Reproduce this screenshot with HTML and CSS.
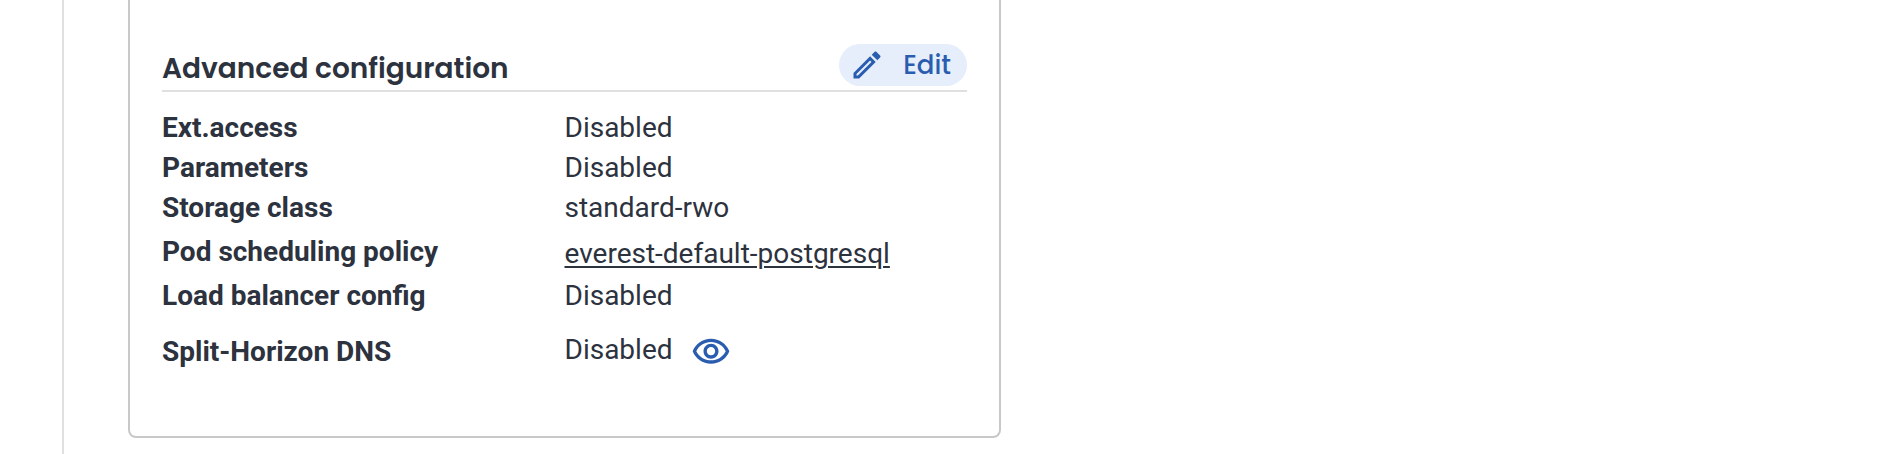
FILE: index.html
```html
<!DOCTYPE html>
<html lang="en">
<head>
    <title>Database overview</title>
    <meta charset="utf-8">
    <meta name="viewport" content="width=device-width, initial-scale=1.0">
    <link rel="stylesheet" href="styles.css">
</head>
<body>
    <main class="content">
        <section class="card">
            <div class="section-header">
                <h2>Advanced configuration</h2>
                <button type="button" class="btn-edit">
                    <svg viewBox="0 0 24 24" aria-hidden="true"><path d="m14.06 9.02.92.92L5.92 19H5v-.92zM17.66 3c-.25 0-.51.1-.7.29l-1.83 1.83 3.75 3.75 1.83-1.83c.39-.39.39-1.02 0-1.41l-2.34-2.34c-.2-.2-.45-.29-.71-.29m-3.6 3.19L3 17.25V21h3.75L17.81 9.94z"/></svg>
                    Edit
                </button>
            </div>

            <dl class="details">
                <div class="row">
                    <dt>Ext.access</dt>
                    <dd>Disabled</dd>
                </div>
                <div class="row">
                    <dt>Parameters</dt>
                    <dd>Disabled</dd>
                </div>
                <div class="row">
                    <dt>Storage class</dt>
                    <dd>standard-rwo</dd>
                </div>
                <div class="row row-link">
                    <dt>Pod scheduling policy</dt>
                    <dd><a href="#policy">everest-default-postgresql</a></dd>
                </div>
                <div class="row">
                    <dt>Load balancer config</dt>
                    <dd>Disabled</dd>
                </div>
                <div class="row row-action">
                    <dt>Split-Horizon DNS</dt>
                    <dd>
                        <span>Disabled</span>
                        <button type="button" class="btn-icon" aria-label="Show details">
                            <svg viewBox="0 0 24 24" aria-hidden="true"><path d="M12 6c3.79 0 7.17 2.13 8.82 5.5C19.17 14.87 15.79 17 12 17s-7.17-2.13-8.82-5.5C4.83 8.13 8.21 6 12 6m0-2C7 4 2.73 7.11 1 11.5 2.73 15.89 7 19 12 19s9.27-3.11 11-7.5C21.27 7.11 17 4 12 4m0 5c1.38 0 2.5 1.12 2.5 2.5S13.38 14 12 14s-2.5-1.12-2.5-2.5S10.62 9 12 9m0-2c-2.48 0-4.5 2.02-4.5 4.5S9.52 16 12 16s4.5-2.02 4.5-4.5S14.48 7 12 7"/></svg>
                        </button>
                    </dd>
                </div>
            </dl>
        </section>
    </main>
</body>
</html>
```
FILE: styles.css
```css
* {
    box-sizing: border-box;
}
body {
    margin: 0;
    background: #fff;
    color: #2c323e;
    font-family: Roboto, "Liberation Sans", sans-serif;
    font-size: 28px;
    line-height: 40px;
}
.content {
    display: grid;
    grid-template-columns: 1fr 1fr;
    align-items: start;
    gap: 28px;
    min-height: 100vh;
    margin-left: 62px;
    padding-left: 64px;
    border-left: 2px solid #e0e0e0;
}
.card {
    padding: 44px 32px 48px;
    border: 2px solid #c8c8c8;
    border-top: none;
    border-radius: 0 0 8px 8px;
}
.section-header {
    display: flex;
    justify-content: space-between;
    align-items: flex-end;
    padding-bottom: 4px;
    border-bottom: 2px solid #e0e0e0;
}
.section-header h2 {
    margin: 0;
    font-family: Poppins, Inter, sans-serif;
    font-size: 28px;
    font-weight: 600;
    line-height: 34px;
}
.btn-edit {
    display: flex;
    align-items: center;
    gap: 18px;
    height: 42px;
    padding: 0 16px 0 10px;
    border: none;
    border-radius: 21px;
    background: #e6eefb;
    color: #2a5db0;
    font-family: Poppins, Inter, sans-serif;
    font-size: 26px;
    font-weight: 500;
    cursor: pointer;
}
.btn-edit svg {
    width: 36px;
    height: 36px;
    fill: currentColor;
}
.details {
    margin: 16px 0 0;
}
.row {
    display: grid;
    grid-template-columns: 1fr 1fr;
    align-items: center;
}
.row dt {
    font-weight: 700;
}
.row dd {
    margin: 0;
}
.row a {
    color: inherit;
    text-underline-offset: 3px;
    text-decoration-thickness: 2px;
}
.row-link dt {
    padding: 4px 0;
}
.row-link dd {
    padding: 6px 0 2px;
}
.row-action dd {
    display: flex;
    align-items: center;
    gap: 2px;
}
.row-action span {
    padding-bottom: 4px;
}
.btn-icon {
    display: flex;
    padding: 16px;
    border: none;
    border-radius: 50%;
    background: none;
    color: #2a5db0;
    cursor: pointer;
}
.btn-icon svg {
    width: 40px;
    height: 40px;
    fill: currentColor;
}
```
